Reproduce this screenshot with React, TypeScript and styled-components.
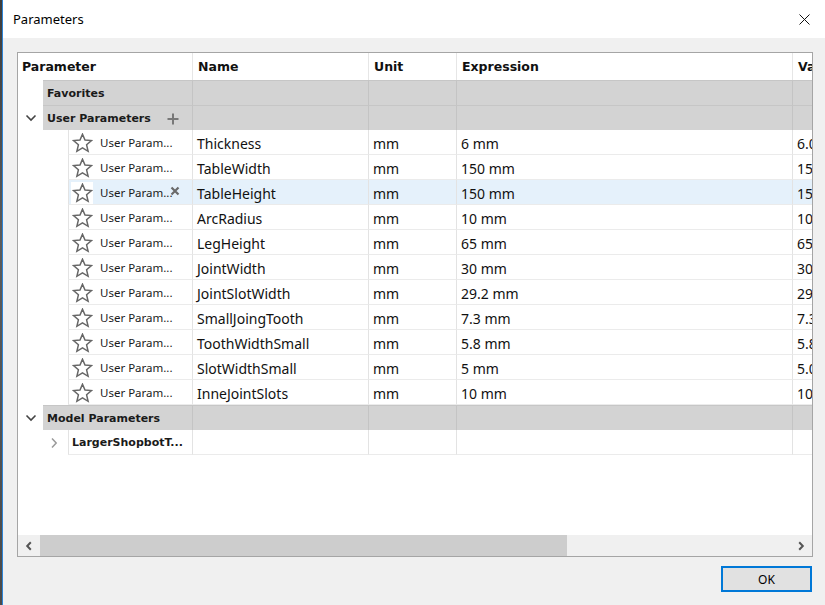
import React from 'react'
import styled, { createGlobalStyle } from 'styled-components'

const GlobalStyle = createGlobalStyle`
  html, body {
    margin: 0;
    padding: 0;
    background: #f0f0f0;
  }
  * {
    box-sizing: border-box;
  }
`

const COLS = '174px 176px 88px 336px 140px'

const Screen = styled.div`
  display: flex;
  width: 825px;
  height: 605px;
  overflow: hidden;
`

const BackStrip = styled.div`
  width: 2px;
  background: linear-gradient(#3d3d3d, #5c5c5c 40%, #4a4a4a);
`

const Dialog = styled.div`
  flex: 1;
  display: flex;
  flex-direction: column;
  border-left: 1px solid #2d84d6;
  min-width: 0;
`

const TitleBar = styled.div`
  height: 38px;
  background: #ffffff;
  display: flex;
  align-items: center;
  justify-content: space-between;
  padding: 0 15px 0 10px;
  font-family: 'Noto Sans', sans-serif;
  font-size: 13px;
  color: #000;
`

const Body = styled.div`
  flex: 1;
  display: flex;
  flex-direction: column;
  padding: 14px 12px 0 14px;
  background: #f0f0f0;
`

const TablePanel = styled.div`
  height: 505px;
  border: 1px solid #a5a5a5;
  background: #ffffff;
  display: flex;
  flex-direction: column;
  overflow: hidden;
`

const GridArea = styled.div`
  height: 482px;
  overflow: hidden;
`

const Row = styled.div<{ $height?: number }>`
  display: grid;
  grid-template-columns: ${COLS};
  height: ${(p) => p.$height ?? 25}px;
`

const HeaderCell = styled.div<{ $first?: boolean }>`
  display: flex;
  align-items: center;
  padding-left: ${(p) => (p.$first ? 4 : 5)}px;
  border-left: ${(p) => (p.$first ? 'none' : '1px solid #e6e6e6')};
  font-family: 'DejaVu Sans', sans-serif;
  font-weight: bold;
  font-size: 12.5px;
  color: #111;
  white-space: nowrap;
  overflow: hidden;
`

const GroupTree = styled.div`
  display: flex;
  align-items: stretch;
`

const Expander = styled.div<{ $width: number; $pad?: number }>`
  width: ${(p) => p.$width}px;
  flex-shrink: 0;
  display: flex;
  align-items: center;
  justify-content: ${(p) => (p.$pad ? 'flex-end' : 'center')};
  padding-right: ${(p) => p.$pad ?? 0}px;
  background: #ffffff;
`

const GroupLabel = styled.div`
  flex: 1;
  display: flex;
  align-items: center;
  gap: 16px;
  padding: 1px 0 0 4px;
  background: #d3d3d3;
  border-top: 1px solid #c6c6c6;
  font-family: 'DejaVu Sans', sans-serif;
  font-weight: bold;
  font-size: 11px;
  color: #1a1a1a;
  white-space: nowrap;
`

const GroupCell = styled.div`
  background: #d3d3d3;
  border-top: 1px solid #c6c6c6;
  border-left: 1px solid #c4c4c4;
`

const ItemTree = styled.div`
  display: flex;
  align-items: stretch;
`

const ItemBox = styled.div<{ $selected?: boolean }>`
  flex: 1;
  position: relative;
  display: flex;
  align-items: center;
  padding: 1px 0 0 2px;
  gap: 7px;
  border-left: 1px solid #e3e3e3;
  border-bottom: 1px solid #ebebeb;
  background: ${(p) => (p.$selected ? '#e5f1fb' : '#ffffff')};
  white-space: nowrap;
  overflow: hidden;
`

const StarBox = styled.div`
  width: 22px;
  height: 22px;
  display: flex;
  align-items: center;
  justify-content: center;
  background: #ffffff;
`

const Origin = styled.span`
  font-family: 'Noto Sans', sans-serif;
  font-size: 11.5px;
  color: #1a1a1a;
`

const ModelName = styled.span`
  padding-left: 1px;
  font-family: 'DejaVu Sans', sans-serif;
  font-weight: bold;
  font-size: 11px;
  color: #1a1a1a;
`

const RemoveMark = styled.div`
  position: absolute;
  right: 12px;
  top: 6px;
  display: flex;
`

const DataCell = styled.div<{ $selected?: boolean }>`
  display: flex;
  align-items: center;
  padding: 2px 0 0 4px;
  border-left: 1px solid #e3e3e3;
  border-bottom: 1px solid #ebebeb;
  background: ${(p) => (p.$selected ? '#e5f1fb' : '#ffffff')};
  font-family: 'Noto Sans', sans-serif;
  font-size: 14px;
  color: #111;
  white-space: nowrap;
  overflow: hidden;
`

const HScroll = styled.div`
  height: 21px;
  display: flex;
  background: #f0f0f0;
`

const ScrollArrow = styled.div`
  width: 22px;
  display: flex;
  align-items: center;
  justify-content: center;
`

const ScrollTrack = styled.div`
  flex: 1;
  display: flex;
`

const ScrollThumb = styled.div`
  width: 527px;
  background: #cdcdcd;
`

const Footer = styled.div`
  display: flex;
  justify-content: flex-end;
  padding: 9px 1px 0 0;
`

const OkButton = styled.button`
  width: 91px;
  height: 26px;
  border: 2px solid #0078d7;
  background: #e1e1e1;
  font-family: 'Noto Sans', sans-serif;
  font-size: 12px;
  color: #000;
  padding: 0;
`

const ChevronDown = () => (
  <svg width="12" height="8" viewBox="0 0 12 8">
    <path d="M1.5 1.5 L6 6 L10.5 1.5" fill="none" stroke="#444" strokeWidth="1.6" />
  </svg>
)

const ChevronRight = () => (
  <svg width="8" height="12" viewBox="0 0 8 12">
    <path d="M2 1.5 L6.2 6 L2 10.5" fill="none" stroke="#9a9a9a" strokeWidth="1.5" />
  </svg>
)

const PlusIcon = () => (
  <svg width="12" height="12" viewBox="0 0 12 12">
    <path d="M6 0.5 V11.5 M0.5 6 H11.5" stroke="#787878" strokeWidth="2" />
  </svg>
)

const XMark = () => (
  <svg width="10" height="10" viewBox="0 0 10 10">
    <path d="M1.5 1.5 L8.5 8.5 M8.5 1.5 L1.5 8.5" stroke="#6a6a6a" strokeWidth="2.2" />
  </svg>
)

const CloseIcon = () => (
  <svg width="11" height="11" viewBox="0 0 11 11">
    <path d="M0.5 0.5 L10.5 10.5 M10.5 0.5 L0.5 10.5" stroke="#111" strokeWidth="1" />
  </svg>
)

const StarIcon = () => (
  <svg width="21" height="20" viewBox="0 0 20 20">
    <polygon
      points="10,1.2 12.5,7.1 19,7.6 14.1,11.8 15.6,18.3 10,14.9 4.4,18.3 5.9,11.8 1,7.6 7.5,7.1"
      fill="none"
      stroke="#666"
      strokeWidth="1.5"
      strokeLinejoin="miter"
    />
  </svg>
)

const ScrollLeft = () => (
  <svg width="8" height="10" viewBox="0 0 8 10">
    <path d="M5.8 1.2 L2.2 5 L5.8 8.8" fill="none" stroke="#555" strokeWidth="2" />
  </svg>
)

const ScrollRight = () => (
  <svg width="8" height="10" viewBox="0 0 8 10">
    <path d="M2.2 1.2 L5.8 5 L2.2 8.8" fill="none" stroke="#555" strokeWidth="2" />
  </svg>
)

type Param = { name: string; expr: string; value: string }

const params: Param[] = [
  { name: 'Thickness', expr: '6 mm', value: '6.00' },
  { name: 'TableWidth', expr: '150 mm', value: '150.00' },
  { name: 'TableHeight', expr: '150 mm', value: '150.00' },
  { name: 'ArcRadius', expr: '10 mm', value: '10.00' },
  { name: 'LegHeight', expr: '65 mm', value: '65.00' },
  { name: 'JointWidth', expr: '30 mm', value: '30.00' },
  { name: 'JointSlotWidth', expr: '29.2 mm', value: '29.20' },
  { name: 'SmallJoingTooth', expr: '7.3 mm', value: '7.30' },
  { name: 'ToothWidthSmall', expr: '5.8 mm', value: '5.80' },
  { name: 'SlotWidthSmall', expr: '5 mm', value: '5.00' },
  { name: 'InneJointSlots', expr: '10 mm', value: '10.00' },
]

const SELECTED = 'TableHeight'

const GroupRow: React.FC<{ label: string; expanded?: boolean; add?: boolean }> = ({
  label,
  expanded,
  add,
}) => (
  <Row>
    <GroupTree>
      <Expander $width={25}>{expanded && <ChevronDown />}</Expander>
      <GroupLabel>
        {label}
        {add && <PlusIcon />}
      </GroupLabel>
    </GroupTree>
    <GroupCell />
    <GroupCell />
    <GroupCell />
    <GroupCell />
  </Row>
)

const ParamRow: React.FC<{ p: Param }> = ({ p }) => {
  const selected = p.name === SELECTED
  return (
    <Row>
      <ItemTree>
        <Expander $width={50} />
        <ItemBox $selected={selected}>
          <StarBox>
            <StarIcon />
          </StarBox>
          <Origin>User Param...</Origin>
          {selected && (
            <RemoveMark>
              <XMark />
            </RemoveMark>
          )}
        </ItemBox>
      </ItemTree>
      <DataCell $selected={selected}>{p.name}</DataCell>
      <DataCell $selected={selected}>mm</DataCell>
      <DataCell $selected={selected}>{p.expr}</DataCell>
      <DataCell $selected={selected}>{p.value}</DataCell>
    </Row>
  )
}

const App: React.FC = () => {
  return (
    <Screen>
      <GlobalStyle />
      <BackStrip />
      <Dialog>
        <TitleBar>
          <span>Parameters</span>
          <CloseIcon />
        </TitleBar>
        <Body>
          <TablePanel>
            <GridArea>
              <Row $height={27}>
                <HeaderCell $first>Parameter</HeaderCell>
                <HeaderCell>Name</HeaderCell>
                <HeaderCell>Unit</HeaderCell>
                <HeaderCell>Expression</HeaderCell>
                <HeaderCell>Value</HeaderCell>
              </Row>
              <GroupRow label="Favorites" />
              <GroupRow label="User Parameters" expanded add />
              {params.map((p) => (
                <ParamRow key={p.name} p={p} />
              ))}
              <GroupRow label="Model Parameters" expanded />
              <Row>
                <ItemTree>
                  <Expander $width={50} $pad={10}>
                    <ChevronRight />
                  </Expander>
                  <ItemBox>
                    <ModelName>LargerShopbotT...</ModelName>
                  </ItemBox>
                </ItemTree>
                <DataCell />
                <DataCell />
                <DataCell />
                <DataCell />
              </Row>
            </GridArea>
            <HScroll>
              <ScrollArrow>
                <ScrollLeft />
              </ScrollArrow>
              <ScrollTrack>
                <ScrollThumb />
              </ScrollTrack>
              <ScrollArrow>
                <ScrollRight />
              </ScrollArrow>
            </HScroll>
          </TablePanel>
          <Footer>
            <OkButton>OK</OkButton>
          </Footer>
        </Body>
      </Dialog>
    </Screen>
  )
}

export default App
